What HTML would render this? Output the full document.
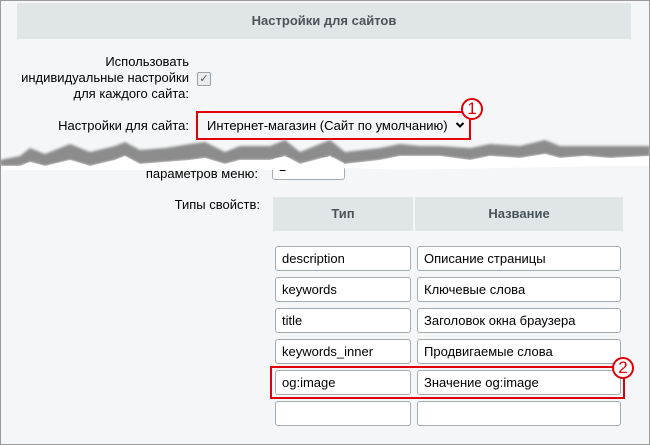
<!DOCTYPE html>
<html><head><meta charset="utf-8"><style>
*{margin:0;padding:0;box-sizing:border-box}
body{width:650px;height:445px;background:#f4f6f7;font-family:"Liberation Sans",Arial,sans-serif;font-size:13px;color:#000;position:relative;overflow:hidden}
.frame{position:absolute;left:0;top:0;width:650px;height:445px;border:1px solid #9a9a9a}
.abs{position:absolute}
.hdr{left:17px;top:3px;width:614px;height:36px;background:#e0e6e8;color:#4b5459;font-weight:bold;text-align:center;line-height:36px;font-size:13px}
.lbl{text-align:right;color:#000;line-height:16px}
.inp{position:absolute;background:#fff;border:1px solid #a4acb2;border-radius:3px;height:25px;line-height:23px;padding-left:6px;font-size:13px}
.th{position:absolute;top:197px;height:34px;background:#e0e6e8;color:#4b5459;font-weight:bold;text-align:center;line-height:34px}
.red{position:absolute;border:2px solid #e0000b}
.num{position:absolute;width:22px;height:22px;border:2px solid #e0000b;border-radius:50%;background:#fff;color:#e0000b;text-align:center;line-height:18px;font-size:17px}
</style></head><body>
<div class="abs hdr">Настройки для сайтов</div>
<div class="abs lbl" style="left:20px;top:54px;width:169px;">Использовать<br>индивидуальные настройки<br>для каждого сайта:</div>
<div class="abs" style="left:197px;top:72px;width:14px;height:14px;border:1px solid #9aa3a8;border-radius:2px;background:#e8ecee;color:#555;font-size:11px;line-height:12px;text-align:center">✓</div>
<div class="abs lbl" style="left:20px;top:118px;width:169px;">Настройки для сайта:</div>
<div class="red" style="left:196px;top:111px;width:275px;height:29px"></div>
<div class="abs" style="left:207px;top:118px;font-size:13px">Интернет-магазин (Сайт по умолчанию)</div>
<svg class="abs" style="left:455px;top:121px" width="10" height="8"><path d="M1.5 2 L5 5.5 L8.5 2" stroke="#000" stroke-width="2" fill="none"/></svg>
<div class="num" style="left:461px;top:98px">1</div>

<div class="abs lbl" style="left:100px;top:166px;width:158px;">параметров меню:</div>
<div class="inp" style="left:272px;top:156px;width:73px;height:24px;line-height:20px">2</div>
<svg class="abs" style="left:0;top:136px" width="650" height="34">
<defs><filter id="b"><feGaussianBlur stdDeviation="1.2"/></filter></defs>
<polygon fill="#8c8c8c" filter="url(#b)" points="0,24 20,20 30,12 45,18 70,8 90,16 115,10 125,6 140,14 165,12 190,8 205,6 225,16 240,10 270,10 285,4 300,16 330,4 345,16 380,12 400,8 420,10 440,10 470,12 490,8 520,10 545,4 560,10 585,10 610,10 650,10 650,20 610,22 585,20 560,22 545,18 520,22 490,20 470,24 440,20 420,20 400,20 380,24 345,28 330,20 300,28 285,20 270,24 240,24 225,28 205,22 190,24 165,26 140,28 125,20 115,24 90,30 70,24 45,30 30,26 20,30 0,30"/>
<polygon fill="#ffffff" points="0,30 20,30 30,26 45,30 70,24 90,30 115,24 125,20 140,28 165,26 190,24 205,22 225,28 240,24 270,24 285,20 300,28 330,20 345,28 380,24 400,20 420,20 440,20 470,24 490,20 520,22 545,18 560,22 585,20 610,22 650,20 650,30 600,30 500,32 400,34 350,32 300,34 200,34 100,34 0,34"/>
</svg>

<div class="abs lbl" style="left:100px;top:197px;width:160px;">Типы свойств:</div>
<div class="th" style="left:273px;width:140px">Тип</div>
<div class="th" style="left:415px;width:208px">Название</div>

<div class="inp" style="left:275px;top:246px;width:136px">description</div>
<div class="inp" style="left:417px;top:246px;width:204px">Описание страницы</div>
<div class="inp" style="left:275px;top:277px;width:136px">keywords</div>
<div class="inp" style="left:417px;top:277px;width:204px">Ключевые слова</div>
<div class="inp" style="left:275px;top:308px;width:136px">title</div>
<div class="inp" style="left:417px;top:308px;width:204px">Заголовок окна браузера</div>
<div class="inp" style="left:275px;top:339px;width:136px">keywords_inner</div>
<div class="inp" style="left:417px;top:339px;width:204px">Продвигаемые слова</div>
<div class="inp" style="left:275px;top:370px;width:136px">og:image</div>
<div class="inp" style="left:417px;top:370px;width:204px">Значение og:image</div>
<div class="inp" style="left:275px;top:401px;width:136px"></div>
<div class="inp" style="left:417px;top:401px;width:204px"></div>
<div class="red" style="left:270px;top:366px;width:355px;height:33px"></div>
<div class="num" style="left:612px;top:357px">2</div>
<div class="frame"></div>
</body></html>
